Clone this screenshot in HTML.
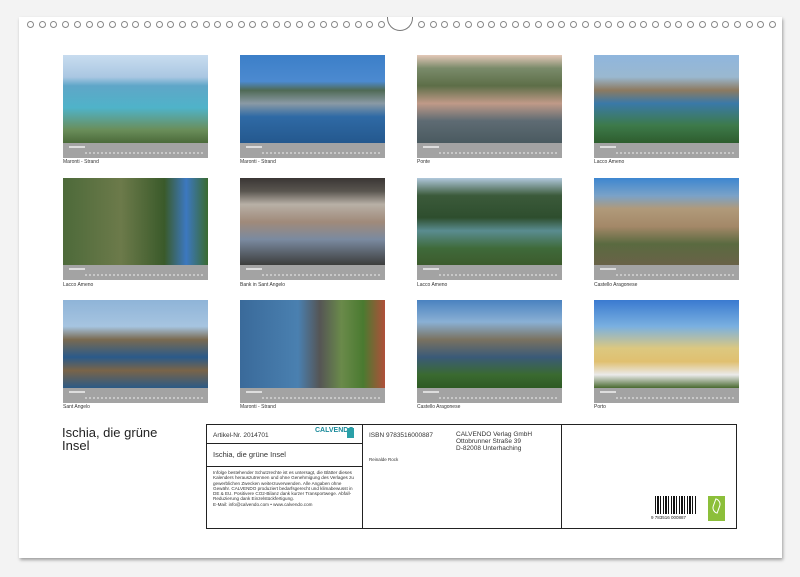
<!DOCTYPE html>
<html><head><meta charset="utf-8"><style>
*{margin:0;padding:0;box-sizing:border-box}
body{width:800px;height:577px;background:#f3f3f3;font-family:"Liberation Sans",sans-serif;position:relative;overflow:hidden}
.card{position:absolute;left:19px;top:17px;width:763px;height:541px;background:#fff;box-shadow:1px 2px 3px rgba(0,0,0,.35)}
.rings{position:absolute;top:21px;left:27px;width:750px;height:10px}
.r{position:absolute;top:0;width:7px;height:7px;border:1px solid #888;border-radius:50%}
.notch{position:absolute;left:387px;top:17px;width:26px;height:14px;border:1px solid #777;border-top:none;border-radius:0 0 13px 13px;background:#fff}
.ph{position:absolute;width:145px;height:88px}
.st{position:absolute;width:145px;height:15px;background:#a3a3a3}
.st:before{content:"";position:absolute;left:6px;top:3px;width:16px;height:2px;background:#ddd}
.st:after{content:"";position:absolute;left:22px;top:9px;width:118px;height:2px;background:repeating-linear-gradient(90deg,#c8c8c8 0 2px,transparent 2px 4px)}
.cap{position:absolute;font-size:5px;color:#333}
.title{position:absolute;left:62px;top:426px;font-size:13px;line-height:13px;color:#222}
.tb{position:absolute;border:1.5px solid #222}
.t{position:absolute;font-size:6.5px;color:#333;line-height:7px}
</style></head><body>
<div class="card"></div>
<div class="rings" id="rings"></div>
<div class="notch"></div>

<!-- row1 -->
<div class="ph" style="left:63px;top:55px;background:linear-gradient(180deg,#c8dcef 0%,#aac7e2 25%,#5fa6c8 35%,#4fb3c9 60%,#6a8e5a 85%,#4b6a3a 100%)"></div>
<div class="ph" style="left:240px;top:55px;background:linear-gradient(180deg,#3c7fc8 0%,#4c8ad0 30%,#4f6a55 40%,#8a9aa5 55%,#2f6aa5 70%,#24588e 100%)"></div>
<div class="ph" style="left:417px;top:55px;background:linear-gradient(180deg,#e4c8b8 0%,#7a8b6a 15%,#5d6e48 35%,#c09a88 55%,#5e6b73 75%,#4a5a60 100%)"></div>
<div class="ph" style="left:594px;top:55px;background:linear-gradient(180deg,#8fb6dd 0%,#9ab8d0 25%,#8d7a60 40%,#3a79a8 55%,#3d7a4a 80%,#2e5d2e 100%)"></div>
<!-- row2 -->
<div class="ph" style="left:63px;top:178px;background:linear-gradient(90deg,#4d6a3a,#6c7a4a 40%,#3a5a2a 70%,#3c78c0 85%,#3a6a30)"></div>
<div class="ph" style="left:240px;top:178px;background:linear-gradient(180deg,#3a3634 0%,#5a5650 15%,#b8b0a6 30%,#a08a7a 50%,#7a8aa0 70%,#3a3a38 100%)"></div>
<div class="ph" style="left:417px;top:178px;background:linear-gradient(180deg,#b0c8dc 0%,#3b5a3a 20%,#2e4e2e 45%,#5a8c90 60%,#3f6a3a 80%,#3c5a2c 100%)"></div>
<div class="ph" style="left:594px;top:178px;background:linear-gradient(180deg,#3d86d0 0%,#7aa2c8 20%,#b09a7a 35%,#a48868 55%,#5a6a40 75%,#6a6248 100%)"></div>
<!-- row3 -->
<div class="ph" style="left:63px;top:300px;background:linear-gradient(180deg,#8fb4d8 0%,#a6c4e0 30%,#7a6a50 45%,#2a5a8a 65%,#7a6448 80%,#2c5a86 100%)"></div>
<div class="ph" style="left:240px;top:300px;background:linear-gradient(90deg,#3a6a9a 0%,#4a80b0 40%,#555 55%,#6a8a4a 70%,#4a7a30 85%,#b0503a 100%)"></div>
<div class="ph" style="left:417px;top:300px;background:linear-gradient(180deg,#4a82c0 0%,#8ab0d4 25%,#7a7260 45%,#3a5a78 65%,#3a6a30 85%,#2e5a24 100%)"></div>
<div class="ph" style="left:594px;top:300px;background:linear-gradient(180deg,#3a7ad0 0%,#7ab0e0 30%,#dcc880 55%,#e0c070 70%,#eaeaea 85%,#4a6a30 100%)"></div>

<div class="st" style="left:63px;top:143px"></div><div class="st" style="left:240px;top:143px"></div><div class="st" style="left:417px;top:143px"></div><div class="st" style="left:594px;top:143px"></div>
<div class="st" style="left:63px;top:265px"></div><div class="st" style="left:240px;top:265px"></div><div class="st" style="left:417px;top:265px"></div><div class="st" style="left:594px;top:265px"></div>
<div class="st" style="left:63px;top:388px"></div><div class="st" style="left:240px;top:388px"></div><div class="st" style="left:417px;top:388px"></div><div class="st" style="left:594px;top:388px"></div>

<div class="cap" style="left:63px;top:159px">Maronti - Strand</div>
<div class="cap" style="left:240px;top:159px">Maronti - Strand</div>
<div class="cap" style="left:417px;top:159px">Ponte</div>
<div class="cap" style="left:594px;top:159px">Lacco Ameno</div>
<div class="cap" style="left:63px;top:282px">Lacco Ameno</div>
<div class="cap" style="left:240px;top:282px">Bank in Sant Angelo</div>
<div class="cap" style="left:417px;top:282px">Lacco Ameno</div>
<div class="cap" style="left:594px;top:282px">Castello Aragonese</div>
<div class="cap" style="left:63px;top:404px">Sant Angelo</div>
<div class="cap" style="left:240px;top:404px">Maronti - Strand</div>
<div class="cap" style="left:417px;top:404px">Castello Aragonese</div>
<div class="cap" style="left:594px;top:404px">Porto</div>

<div class="title">Ischia, die grüne<br>Insel</div>

<div class="tb" style="left:206px;top:424px;width:531px;height:105px"></div>
<div class="tb" style="left:206px;top:424px;width:157px;height:105px"></div>
<div class="tb" style="left:361px;top:424px;width:201px;height:105px;border-left:none"></div>
<div class="tb" style="left:206px;top:443px;width:157px;height:24px;border-left:none;border-right:none"></div>

<div class="t" style="left:213px;top:432px">Artikel-Nr. 2014701</div>
<div style="position:absolute;left:315px;top:427px;font-size:7px;color:#1a8a9a;font-weight:bold">CALVENDO</div>
<div style="position:absolute;left:347px;top:428px;width:7px;height:10px;background:#2aa0a8"></div>
<div class="t" style="left:213px;top:451px;font-size:7.5px">Ischia, die grüne Insel</div>
<div class="t" style="left:213px;top:470px;font-size:4.6px;line-height:5.3px;width:145px">Infolge bestehender Schutzrechte ist es untersagt, die Blätter dieses Kalenders herauszutrennen und ohne Genehmigung des Verlages zu gewerblichen Zwecken weiterzuverwenden. Alle Angaben ohne Gewähr. CALVENDO produziert bedarfsgerecht und klimabewusst in DE &amp; EU. Positivere CO2-Bilanz dank kurzer Transportwege. Abfall-Reduzierung dank Einzelstückfertigung.<br>E-Mail: info@calvendo.com • www.calvendo.com</div>
<div class="t" style="left:369px;top:432px">ISBN 9783516000887</div>
<div class="t" style="left:369px;top:456px;font-size:4.5px">Reinalde Rock</div>
<div class="t" style="left:456px;top:431px">CALVENDO Verlag GmbH<br>Ottobrunner Straße 39<br>D-82008 Unterhaching</div>

<div style="position:absolute;left:655px;top:496px;width:42px;height:18px;background:repeating-linear-gradient(90deg,#111 0 1px,#fff 1px 2px,#111 2px 4px,#fff 4px 5px,#111 5px 6px,#fff 6px 8px)"></div>
<div style="position:absolute;left:651px;top:515px;font-size:4.5px;color:#222">9 783516 000887</div>
<div style="position:absolute;left:708px;top:496px;width:17px;height:25px;background:#8cbf3a"><div style="position:absolute;left:5px;top:3px;width:7px;height:14px;border:1.5px solid #fff;border-radius:0 6px 0 6px;transform:rotate(20deg)"></div></div>

<script>
var r=document.getElementById('rings'),h='';
for(var x=0;x<352;x+=11.7)h+='<div class="r" style="left:'+x+'px"></div>';
for(var x=391;x<748;x+=11.7)h+='<div class="r" style="left:'+x+'px"></div>';
r.innerHTML=h;
</script>
</body></html>
